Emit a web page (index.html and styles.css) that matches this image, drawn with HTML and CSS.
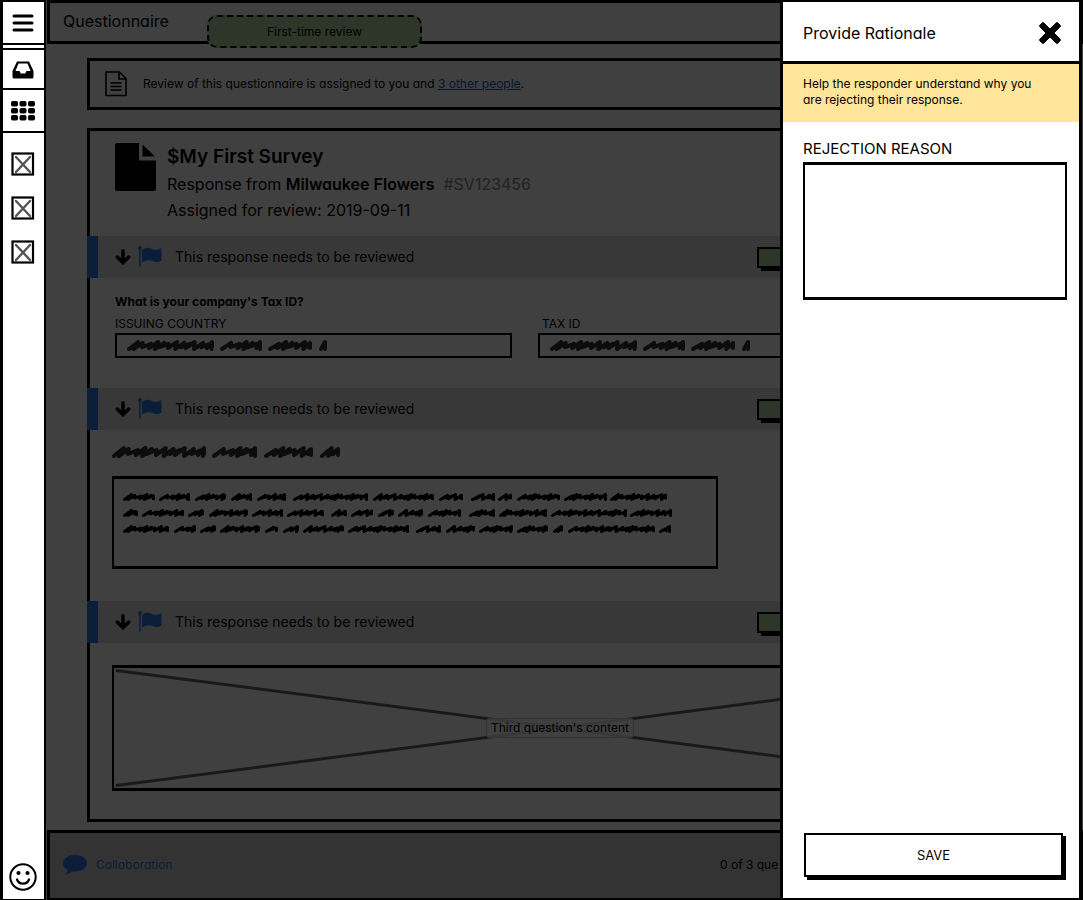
FILE: index.html
```html
<!DOCTYPE html>
<html lang="en">
<head>
<meta charset="utf-8">
<title>Questionnaire</title>
<link rel="stylesheet" href="styles.css">
</head>
<body>
<svg class="defs" width="0" height="0" aria-hidden="true">
  <symbol id="arrow" viewBox="0 0 14 14"><path d="M7 1.500v10M2 7l5 5 5-5" fill="none" stroke="#000" stroke-width="3" stroke-linecap="round"/></symbol>
  <symbol id="flag" viewBox="0 0 24 22"><path d="M2 2v18" stroke="#2b78e4" stroke-width="1.600" stroke-linecap="round"/><circle cx="2" cy="2" r="1.900" fill="#2b78e4"/><path d="M4 4c4-3 7-2.500 10-1s6 1 9.500-1v12.500c-3.500 2-6 2-9.500.5s-6-1-10 1.500z" fill="#2b78e4"/></symbol>
  <symbol id="placeholder" viewBox="0 0 24 24"><rect x="1.500" y="1.500" width="20.500" height="21" fill="#fff" stroke="#000" stroke-width="2.200"/><path d="M5 5l14 15M19 5L5 20" stroke="#555" stroke-width="2.400" stroke-linecap="round"/></symbol>
</svg>
<div class="app">
  <nav class="rail" aria-label="Main">
    <button class="rail-cell rail-menu" aria-label="Menu"><svg width="22" height="18" viewBox="0 0 22 18"><path d="M2 2h18M2 9h18M2 16h18" stroke="#000" stroke-width="3" stroke-linecap="round"/></svg></button>
    <button class="rail-cell rail-inbox" aria-label="Inbox"><svg width="22" height="18" viewBox="0 0 22 18"><path fill-rule="evenodd" d="M5 .5h12l4.500 9.500v6q0 1.500-1.500 1.500H2Q.5 17.500.5 16v-6zM6.500 2.500L3.500 10h4l1.300 2.500h4.400l1.300-2.500h4l-3-7.500z"/></svg></button>
    <button class="rail-cell rail-grid" aria-label="Apps"><svg width="24" height="20" viewBox="0 0 24 20"><g fill="#000"><rect width="7" height="5.500" rx="1.800"/><rect x="8.500" width="7" height="5.500" rx="1.800"/><rect x="17" width="7" height="5.500" rx="1.800"/><rect y="7" width="7" height="5.500" rx="1.800"/><rect x="8.500" y="7" width="7" height="5.500" rx="1.800"/><rect x="17" y="7" width="7" height="5.500" rx="1.800"/><rect y="14" width="7" height="5.500" rx="1.800"/><rect x="8.500" y="14" width="7" height="5.500" rx="1.800"/><rect x="17" y="14" width="7" height="5.500" rx="1.800"/></g></svg></button>
    <div class="rail-items">
      <svg width="24" height="24"><use href="#placeholder"/></svg>
      <svg width="24" height="24"><use href="#placeholder"/></svg>
      <svg width="24" height="24"><use href="#placeholder"/></svg>
    </div>
    <svg class="rail-face" width="28" height="28" viewBox="0 0 28 28"><circle cx="14" cy="14" r="12.700" fill="none" stroke="#000" stroke-width="2"/><circle cx="9.500" cy="10" r="2.100"/><circle cx="18.500" cy="10" r="2.100"/><path d="M8 16.500c2 5.500 10 5.500 12 0" fill="none" stroke="#000" stroke-width="2.200" stroke-linecap="round"/></svg>
  </nav>

  <main class="page">
    <header class="topbar">
      <h1 class="topbar-title">Questionnaire</h1>
      <span class="chip">First-time review</span>
    </header>

    <div class="content">
      <section class="notice">
        <svg width="22" height="26" viewBox="0 0 22 26"><path d="M2 1h12.500L21 7.500V24.500H1V1zM14 1v7h7M5.500 12h11M5.500 15.500h11M5.500 19h11" fill="none" stroke="#000" stroke-width="1.600"/></svg>
        <p class="notice-text">Review of this questionnaire is assigned to you and <a class="link" href="#people">3 other people</a>.</p>
      </section>

      <article class="card">
        <div class="survey">
          <svg width="42" height="49" viewBox="0 0 42 49"><path d="M2 0h22v17.500h17V46q0 2-2 2H2q-2 0-2-2V2q0-2 2-2zM27.500 1.500L40 13.500H27.500z"/></svg>
          <div class="survey-text">
            <h2 class="survey-title">$My First Survey</h2>
            <p class="survey-line">Response from <b>Milwaukee Flowers</b><span class="survey-id">#SV123456</span></p>
            <p class="survey-line">Assigned for review: 2019-09-11</p>
          </div>
        </div>

        <section class="question">
          <div class="question-bar">
            <svg width="16" height="16"><use href="#arrow"/></svg>
            <svg class="flag" width="24" height="22"><use href="#flag"/></svg>
            <span class="question-status">This response needs to be reviewed</span>
            <button class="approve" aria-label="Approve"></button>
          </div>
          <div class="answer answer-fields">
            <h3 class="answer-title">What is your company's Tax ID?</h3>
            <div class="fields">
              <div class="field">
                <span class="field-label">ISSUING COUNTRY</span>
                <div class="field-box"><svg class="scribble" width="200" height="13" data-ink="#333" data-weight="4" data-words="0-87,93-135,141-185,192-200"></svg></div>
              </div>
              <div class="field">
                <span class="field-label field-label-inset">TAX ID</span>
                <div class="field-box"><svg class="scribble" width="200" height="13" data-ink="#333" data-weight="4" data-words="0-87,93-135,141-185,192-200"></svg></div>
              </div>
            </div>
          </div>
        </section>

        <section class="question">
          <div class="question-bar">
            <svg width="16" height="16"><use href="#arrow"/></svg>
            <svg class="flag" width="24" height="22"><use href="#flag"/></svg>
            <span class="question-status">This response needs to be reviewed</span>
            <button class="approve" aria-label="Approve"></button>
          </div>
          <div class="answer answer-long">
            <svg class="scribble" width="228" height="14" data-ink="#333" data-weight="4" data-words="0-94,100-145,152-201,208-228"></svg>
            <div class="long-box">
              <svg class="scribble" width="550" height="10" data-ink="#000" data-weight="3" data-words="0-32,36-67,72-103,108-129,134-163,170-245,250-311,316-340,348-372,375-389,394-437,441-484,487-544"></svg>
              <svg class="scribble" width="550" height="10" data-ink="#000" data-weight="3" data-words="0-15,19-61,65-81,86-125,129-160,164-201,208-224,228-250,255-271,275-300,305-338,346-372,376-424,428-504,507-549"></svg>
              <svg class="scribble" width="550" height="10" data-ink="#000" data-weight="3" data-words="0-46,51-73,77-93,97-137,142-155,160-176,180-221,225-286,293-318,323-352,356-390,394-425,430-440,445-532,536-548"></svg>
            </div>
          </div>
        </section>

        <section class="question">
          <div class="question-bar">
            <svg width="16" height="16"><use href="#arrow"/></svg>
            <svg class="flag" width="24" height="22"><use href="#flag"/></svg>
            <span class="question-status">This response needs to be reviewed</span>
            <button class="approve" aria-label="Approve"></button>
          </div>
          <div class="answer answer-media">
            <div class="media">
              <svg class="media-cross" viewBox="0 0 100 100" preserveAspectRatio="none"><path d="M.2 2L99.800 98M.2 98L99.800 2" stroke="#666" stroke-width="3" vector-effect="non-scaling-stroke"/></svg>
              <span class="media-label">Third question's content</span>
            </div>
          </div>
        </section>
      </article>
    </div>

    <footer class="footer">
      <a class="collab" href="#collaboration"><svg width="26" height="22" viewBox="0 0 26 22"><path d="M13 1c7 0 12 3.500 12 8.300S20 17.500 13 17.500q-1.500 0-3-.3Q7 20.500 2.500 21q3-2 3-5.300Q1 13.500 1 9.300C1 4.500 6 1 13 1z" fill="#2b78e4"/></svg>Collaboration</a>
      <span class="progress">0 of 3 que</span>
    </footer>
    <div class="scrim"></div>
  </main>

  <aside class="drawer">
    <header class="drawer-head">
      <h2 class="drawer-title">Provide Rationale</h2>
      <button class="close" aria-label="Close"><svg width="24" height="24" viewBox="0 0 24 24"><path d="M5.700 1.800L12 8.100l6.300-6.300q.7-.7 1.400 0l2.500 2.500q.7.7 0 1.400L15.900 12l6.300 6.300q.7.7 0 1.400l-2.500 2.500q-.7.7-1.400 0L12 15.900l-6.300 6.300q-.7.7-1.400 0l-2.500-2.500q-.7-.7 0-1.400L8.100 12 1.800 5.700q-.7-.7 0-1.400l2.500-2.500q.7-.7 1.400 0z" stroke="#000" stroke-linejoin="round"/></svg></button>
    </header>
    <p class="drawer-note">Help the responder understand why you are rejecting their response.</p>
    <form class="drawer-form">
      <label class="reason-label" for="reason">REJECTION REASON</label>
      <textarea class="reason" id="reason"></textarea>
      <button class="save" type="button">SAVE</button>
    </form>
  </aside>
</div>
<script src="scribble.js"></script>
</body>
</html>
```
FILE: styles.css
```css
* { box-sizing: border-box; }
body {
  margin: 0;
  font-family: Inter, "Open Sans", sans-serif;
  font-feature-settings: "cv11", "ss03";
  font-size: 12px;
  line-height: 16px;
  color: #000;
  background: #fff;
}
h1, h2, h3, p { margin: 0; font-weight: 400; }
button { font: inherit; color: inherit; padding: 0; border: 0; background: none; }
svg { display: block; flex: none; }
.defs { position: absolute; }

.app {
  position: relative;
  display: grid;
  grid-template-columns: 46px 1fr;
  min-height: 100vh;
}

/* left rail */
.rail {
  display: flex;
  flex-direction: column;
  align-items: center;
  border: solid #000;
  border-width: 2px 2px 2px 3px;
}
.rail-cell {
  display: flex;
  align-items: center;
  justify-content: center;
  width: 100%;
  padding-right: 2px;
  border-bottom: 2px solid #000;
}
.rail-menu { height: 43px; }
.rail-inbox { height: 42px; margin-top: 3px; padding-top: 2px; border-top: 2px solid #000; }
.rail-grid { height: 43px; }
.rail-items { display: grid; gap: 20px; padding: 19px 2px 0 0; }
.rail-face { margin: auto 2px 8px 0; }

/* page */
.page {
  position: relative;
  display: flex;
  flex-direction: column;
  padding-left: 1px;
  overflow: hidden;
}
.topbar {
  position: relative;
  height: 44px;
  padding: 0 13px;
  border: 3px solid #000;
}
.topbar-title { font-size: 16px; line-height: 36px; }
.chip {
  position: absolute;
  top: 12px;
  left: 157px;
  width: 215px;
  border: 2px dashed #000;
  border-radius: 10px;
  background: #b6d7a8;
  line-height: 29px;
  text-align: center;
}
.content { flex: 1; padding: 14px 50px 8px 40px; }
.notice {
  display: flex;
  align-items: center;
  gap: 16px;
  height: 52px;
  padding: 0 15px;
  border: 3px solid #000;
}
.link { color: #1a5fa8; }
.card { margin-top: 18px; border: 3px solid #000; }
.survey { display: flex; gap: 10px; height: 105px; padding: 12px 25px; }
.survey-title { font-size: 19px; line-height: 28px; font-weight: 600; }
.survey-line { font-size: 16px; line-height: 26px; }
.survey-line b { font-weight: 600; }
.survey-id { margin-left: 9px; color: #888; }

.question-bar {
  display: flex;
  align-items: center;
  height: 42px;
  padding-left: 17px;
  margin-left: -3px;
  border-left: 11px solid #2b78e4;
  background: #e0e0e0;
}
.flag { margin-left: 7px; }
.question-status { flex: 0 0 582px; margin-left: 13px; font-size: 14px; }
.approve {
  width: 112px;
  height: 21px;
  border: 2px solid #000;
  background: #b6d7a8;
  box-shadow: 4px 3px 0 #000;
}
.answer-fields { height: 110px; padding: 16px 25px 0; }
.answer-title { font-size: 12px; font-weight: 700; }
.fields {
  display: grid;
  grid-template-columns: 397px 397px;
  gap: 26px;
  padding-top: 6px;
}
.field-label { display: block; line-height: 16px; }
.field-label-inset { padding-left: 4px; }
.field-box {
  height: 25px;
  margin-top: 1px;
  padding: 4px 10px;
  border: 2px solid #000;
}
.answer-long { height: 171px; padding: 15px 22px 0; }
.long-box {
  display: grid;
  align-content: start;
  gap: 6px;
  width: 606px;
  height: 93px;
  margin-top: 17px;
  padding: 13px 9px;
  border: solid #000;
  border-width: 3px 2px;
}
.answer-media { padding: 22px 22px 28px; }
.media {
  position: relative;
  display: flex;
  align-items: center;
  justify-content: center;
  height: 126px;
  border: solid #000;
  border-width: 3px 2px;
}
.media-cross { position: absolute; inset: 0; width: 100%; height: 100%; }
.media-label {
  position: relative;
  padding: 1px 4px;
  border: 1px solid #ccc;
  border-radius: 3px;
  background: rgba(255, 255, 255, 0.8);
}
.footer {
  display: flex;
  align-items: center;
  height: 71px;
  padding: 0 12px 1px;
  border: 3px solid #000;
  background: #ccc;
}
.collab {
  display: flex;
  align-items: center;
  gap: 8px;
  width: 658px;
  color: #2b78e4;
  text-decoration: none;
}
.scrim { position: absolute; inset: 0; background: rgba(0, 0, 0, 0.75); }

/* drawer laid over the page */
.drawer {
  position: absolute;
  top: 0;
  right: 1px;
  bottom: 0;
  display: flex;
  flex-direction: column;
  width: 302px;
  border: 3px solid #000;
  border-top-width: 2px;
  background: #fff;
}
.drawer-head {
  display: flex;
  align-items: center;
  justify-content: space-between;
  height: 62px;
  padding: 2px 17px 0 20px;
  border-bottom: 3px solid #000;
}
.drawer-title { font-size: 16px; }
.drawer-note { height: 58px; padding: 12px 32px 14px 20px; background: #ffe599; }
.drawer-form {
  display: flex;
  flex: 1;
  flex-direction: column;
  padding: 18px 12px 21px 20px;
}
.reason-label { font-size: 15px; line-height: 18px; }
.reason {
  height: 138px;
  margin-top: 4px;
  border: solid #000;
  border-width: 3px 2px;
  resize: none;
  font: inherit;
}
.save {
  height: 44px;
  margin: auto 4px 0 1px;
  border: 2px solid #000;
  background: #fff;
  box-shadow: 3px 3px 0 #000;
  font-size: 13px;
}
```
FILE: scribble.js
```js
// Fills each .scribble with hand-drawn strokes, one for every "start-end" word.
document.querySelectorAll(".scribble").forEach(function (svg) {
  var h = Number(svg.getAttribute("height"));
  var weight = Number(svg.dataset.weight);
  var edge = weight / 2;
  svg.dataset.words.split(",").forEach(function (word, n) {
    var ends = word.split("-").map(Number);
    var x = ends[0] + edge;
    var last = ends[1] - edge;
    var d = "M" + x + " " + (h - edge - 1);
    for (var i = n; x < last; i++) {
      var up = edge + 1 + (i * 7 % 3) * h / 14;
      var down = h - edge - 1 - (i * 5 % 3) * h / 14;
      var top = Math.min(x + h * 0.7, last);
      d += " L" + top + " " + up;
      x += h * (0.35 + (i * 3 % 4) * 0.1);
      d += " L" + Math.min(x, last) + " " + down;
    }
    var path = document.createElementNS("http://www.w3.org/2000/svg", "path");
    path.setAttribute("d", d);
    path.setAttribute("fill", "none");
    path.setAttribute("stroke", svg.dataset.ink);
    path.setAttribute("stroke-width", weight);
    path.setAttribute("stroke-linecap", "round");
    path.setAttribute("stroke-linejoin", "round");
    svg.appendChild(path);
  });
});
```
